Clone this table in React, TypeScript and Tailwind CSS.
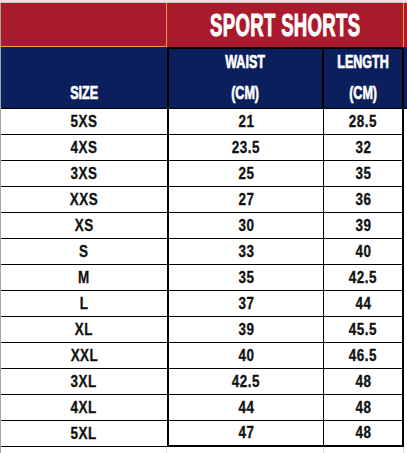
const rows: [string, string, string][] = [
  ["5XS", "21", "28.5"],
  ["4XS", "23.5", "32"],
  ["3XS", "25", "35"],
  ["XXS", "27", "36"],
  ["XS", "30", "39"],
  ["S", "33", "40"],
  ["M", "35", "42.5"],
  ["L", "37", "44"],
  ["XL", "39", "45.5"],
  ["XXL", "40", "46.5"],
  ["3XL", "42.5", "48"],
  ["4XL", "44", "48"],
  ["5XL", "47", "48"],
];

function Head({ children }: { children: string }) {
  return (
    <span className="inline-block whitespace-nowrap scale-x-[0.66] text-[19px] leading-[31px] text-white [-webkit-text-stroke:0.7px_white]">
      {children}
    </span>
  );
}

function Val({ children }: { children: string }) {
  return (
    <span className="inline-block whitespace-nowrap scale-x-[0.84] text-[16px] tracking-[0.6px] text-[#111] [-webkit-text-stroke:0.3px_#111]">
      {children}
    </span>
  );
}

export default function App() {
  return (
    <div className="w-[407px] h-[453px] bg-white overflow-hidden font-['Liberation_Sans',Arial,sans-serif] font-bold">
      <div className="h-[3px] bg-[#e4e4e4] border-b border-[#c9c9c9]" />
      <div className="grid grid-cols-[166px_157px_80px_1fr] border-l border-[#a5a5a5]">
        {/* red title row */}
        <div className="h-[44px] bg-[#aa1a2d] border-r border-b border-[#f0a030]" />
        <div className="col-span-2 h-[44px] bg-[#aa1a2d] border-r border-[#f0a030] flex items-center justify-center">
          <span className="inline-block whitespace-nowrap scale-x-[0.6] text-[31px] leading-none text-white tracking-[0.5px] [-webkit-text-stroke:1px_white]">
            SPORT SHORTS
          </span>
        </div>
        <div className="h-[44px] bg-[#aa1a2d]" />

        {/* blue header row */}
        <div className="h-[62px] bg-[#0b1f5c] border-b border-black flex items-end justify-center">
          <Head>SIZE</Head>
        </div>
        <div className="h-[62px] bg-[#0b1f5c] border-l-2 border-t-2 border-r-2 border-b border-black flex flex-col items-center justify-end">
          <Head>WAIST</Head>
          <Head>(CM)</Head>
        </div>
        <div className="h-[62px] bg-[#0b1f5c] border-t-2 border-r-2 border-b border-black flex flex-col items-center justify-end">
          <Head>LENGTH</Head>
          <Head>(CM)</Head>
        </div>
        <div className="h-[62px] bg-[#0b1f5c] border-b border-black" />

        {rows.map(([size, waist, length], i) => {
          const last = i === rows.length - 1;
          return [
            <div key={`a${i}`} className="h-[26px] border-b border-black flex items-center justify-center">
              <Val>{size}</Val>
            </div>,
            <div
              key={`b${i}`}
              className={`h-[26px] border-l-2 border-r border-black flex items-center justify-center ${last ? "border-b-2" : "border-b"}`}
            >
              <Val>{waist}</Val>
            </div>,
            <div
              key={`c${i}`}
              className={`h-[26px] border-r-2 border-black flex items-center justify-center ${last ? "border-b-2" : "border-b"}`}
            >
              <Val>{length}</Val>
            </div>,
            <div key={`d${i}`} className="h-[26px]" />,
          ];
        })}

        <div className="h-[10px] border-r border-[#dedede]" />
        <div className="h-[10px] border-r border-[#dedede]" />
        <div className="h-[10px] border-r border-[#dedede]" />
        <div className="h-[10px]" />
      </div>
    </div>
  );
}
